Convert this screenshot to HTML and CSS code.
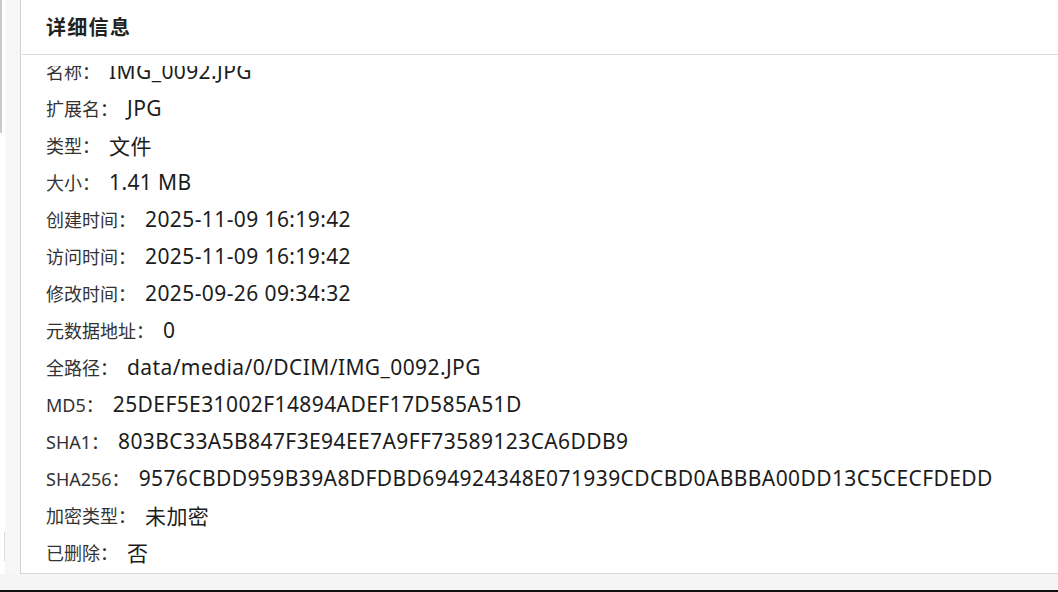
FILE: index.html
```html
<!DOCTYPE html>
<html lang="zh-CN">
<head>
<meta charset="utf-8">
<title>详细信息</title>
<link rel="stylesheet" href="styles.css">
</head>
<body>
<div class="app">
  <div class="main">
    <div class="side">
      <div class="side-track"><div class="side-thumb"></div><div class="side-mark"></div></div>
      <div class="side-fill"></div>
    </div>
    <div class="panel">
      <div class="panel-head"><h2 class="panel-title">详细信息</h2></div>
      <div class="panel-body">
        <ul class="info-list">
          <li class="info-row"><span class="info-label">名称：</span><span class="info-value">IMG_0092.JPG</span></li>
          <li class="info-row"><span class="info-label">扩展名：</span><span class="info-value">JPG</span></li>
          <li class="info-row"><span class="info-label">类型：</span><span class="info-value">文件</span></li>
          <li class="info-row"><span class="info-label">大小：</span><span class="info-value">1.41 MB</span></li>
          <li class="info-row"><span class="info-label">创建时间：</span><span class="info-value">2025-11-09 16:19:42</span></li>
          <li class="info-row"><span class="info-label">访问时间：</span><span class="info-value">2025-11-09 16:19:42</span></li>
          <li class="info-row"><span class="info-label">修改时间：</span><span class="info-value">2025-09-26 09:34:32</span></li>
          <li class="info-row"><span class="info-label">元数据地址：</span><span class="info-value">0</span></li>
          <li class="info-row"><span class="info-label">全路径：</span><span class="info-value">data/media/0/DCIM/IMG_0092.JPG</span></li>
          <li class="info-row"><span class="info-label">MD5：</span><span class="info-value">25DEF5E31002F14894ADEF17D585A51D</span></li>
          <li class="info-row"><span class="info-label">SHA1：</span><span class="info-value">803BC33A5B847F3E94EE7A9FF73589123CA6DDB9</span></li>
          <li class="info-row"><span class="info-label">SHA256：</span><span class="info-value">9576CBDD959B39A8DFDBD694924348E071939CDCBD0ABBBA00DD13C5CECFDEDD</span></li>
          <li class="info-row"><span class="info-label">加密类型：</span><span class="info-value">未加密</span></li>
          <li class="info-row"><span class="info-label">已删除：</span><span class="info-value">否</span></li>
        </ul>
      </div>
    </div>
  </div>
  <div class="foot"></div>
  <div class="foot-line"></div>
</div>
</body>
</html>
```
FILE: styles.css
```css
* { box-sizing: border-box; }
html, body { margin: 0; padding: 0; }
body {
  width: 1058px;
  height: 592px;
  overflow: hidden;
  background: #f5f5f5;
  font-family: "Noto Sans", "Noto Sans CJK SC", sans-serif;
  color: #222;
}
.app { display: flex; flex-direction: column; height: 592px; }
.main { display: flex; height: 574px; }
.side { width: 20px; display: flex; }
.side-track { width: 5px; background: #fff; display: flex; flex-direction: column; }
.side-thumb { width: 2px; height: 133px; background: #c9c9c9; }
.side-mark { width: 1px; height: 29px; margin-top: 399px; margin-left: 4px; background: #dadada; }
.side-fill { flex: 1; background: #f7f7f7; }
.panel {
  flex: 1;
  background: #fff;
  border-left: 1px solid #d2d2d2;
  border-bottom: 1px solid #d6d6d6;
  display: flex;
  flex-direction: column;
}
.panel-head {
  height: 55px;
  border-bottom: 1px solid #dcdcdc;
  margin-left: 1px;
  padding-left: 24px;
  display: flex;
  align-items: center;
}
.panel-title {
  margin: 0;
  font-size: 20px;
  font-weight: 700;
  letter-spacing: 1.3px;
  color: #222;
  position: relative;
  top: -1px;
}
.panel-body {
  flex: 1;
  margin-top: 11px;
  overflow: hidden;
  padding-left: 25px;
}
.info-list {
  list-style: none;
  margin: -14px 0 0;
  padding: 0;
}
.info-row {
  height: 37px;
  display: flex;
  align-items: center;
  white-space: nowrap;
}
.info-label {
  font-size: 18px;
  color: #333;
  margin-right: 9px;
}
.info-value {
  font-size: 21px;
  letter-spacing: 0.4px;
  color: #1c1c1c;
}
.foot { height: 16px; background: #f5f5f5; }
.foot-line { height: 2px; background: #111; }
```
